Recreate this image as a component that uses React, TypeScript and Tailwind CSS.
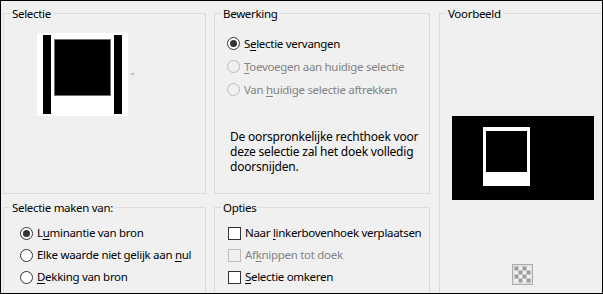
import React from 'react';

type GroupProps = {
  title: string;
  className?: string;
  children?: React.ReactNode;
};

function Group({ title, className = '', children }: GroupProps) {
  return (
    <div className={`shrink-0 border border-[#dcdcdc] ${className}`}>
      <div className="-mt-[8px] ml-[6px] w-fit bg-[#f0f0f0] px-[2px] text-[11.5px] leading-4 tracking-[-0.3px]">{title}</div>
      {children}
    </div>
  );
}

function Radio({ checked = false, disabled = false }: { checked?: boolean; disabled?: boolean }) {
  return (
    <span
      className={`flex h-[13px] w-[13px] shrink-0 items-center justify-center rounded-full border ${
        disabled ? 'border-[#bcbcbc] bg-[#f0f0f0]' : 'border-[#333333] bg-white'
      }`}
    >
      {checked && <span className="h-[7px] w-[7px] rounded-full bg-[#333333]" />}
    </span>
  );
}

function Check({ disabled = false }: { disabled?: boolean }) {
  return (
    <span
      className={`h-[13px] w-[13px] shrink-0 border ${
        disabled ? 'border-[#bcbcbc] bg-[#f0f0f0]' : 'border-[#333333] bg-white'
      }`}
    />
  );
}

// label with an underlined access key
function Label({ text, k, disabled = false }: { text: string; k: number; disabled?: boolean }) {
  return (
    <span className={`whitespace-nowrap text-[11.5px] tracking-[-0.3px] ${disabled ? 'text-[#838383]' : 'text-black'}`}>
      {text.slice(0, k)}
      <span className="underline underline-offset-[2px]">{text[k]}</span>
      {text.slice(k + 1)}
    </span>
  );
}

function SelectieThumb() {
  return (
    <svg width="91" height="83" viewBox="0 0 91 83">
      <rect width="91" height="83" fill="#fff" />
      <rect x="6" y="2" width="8" height="79" fill="#000" />
      <rect x="77" y="2" width="8" height="79" fill="#000" />
      <rect x="17.5" y="6.5" width="56" height="56" fill="#000" stroke="#6e6e6e" />
    </svg>
  );
}

function PreviewImage() {
  return (
    <svg width="142" height="84" viewBox="0 0 142 84">
      <rect width="142" height="84" fill="#000" />
      <rect x="31" y="11" width="47" height="59" fill="#fff" />
      <rect x="34" y="15" width="41" height="41" fill="#000" />
    </svg>
  );
}

function CheckerButton() {
  const cells = [];
  for (let r = 0; r < 4; r++) {
    for (let c = 0; c < 4; c++) {
      if ((r + c) % 2 === 0) cells.push(<rect key={`${r}-${c}`} x={2.5 + c * 4} y={2.5 + r * 4} width="4" height="4" fill="#9c9c9c" />);
    }
  }
  return (
    <svg width="21" height="21" viewBox="0 0 21 21">
      <rect x="0.5" y="0.5" width="20" height="20" fill="#e1e1e1" stroke="#adadad" />
      <rect x="2.5" y="2.5" width="16" height="16" fill="#f2f2f2" />
      {cells}
    </svg>
  );
}

export default function App() {
  return (
    <div className="flex h-[294px] w-[603px] overflow-hidden border border-black bg-[#f0f0f0] pl-[2px] pt-[12px] font-['Noto_Sans',sans-serif] text-[12px] tracking-[-0.2px] text-black">
      {/* left column */}
      <div className="flex w-[203px] shrink-0 flex-col">
        <Group title="Selectie" className="h-[181px]">
          <div className="ml-[33px] mt-[11px] flex items-center">
            <SelectieThumb />
            <svg className="ml-[2px]" width="5" height="3" viewBox="0 0 5 3">
              <path d="M0 0h5L2.5 3z" fill="#c4c4c4" />
            </svg>
          </div>
        </Group>
        <Group title="Selectie maken van:" className="mt-[13px] h-[120px]">
          <div className="mt-[6px] flex flex-col pl-[16px]">
            <div className="flex h-[22px] items-center gap-[4px]">
              <Radio checked />
              <Label text="Luminantie van bron" k={1} />
            </div>
            <div className="flex h-[22px] items-center gap-[4px]">
              <Radio />
              <Label text="Elke waarde niet gelijk aan nul" k={28} />
            </div>
            <div className="flex h-[22px] items-center gap-[4px]">
              <Radio />
              <Label text="Dekking van bron" k={0} />
            </div>
          </div>
        </Group>
      </div>

      {/* middle column */}
      <div className="ml-[8px] flex w-[216px] shrink-0 flex-col">
        <Group title="Bewerking" className="h-[181px]">
          <div className="mt-[10px] flex flex-col pl-[12px]">
            <div className="flex h-[23px] items-center gap-[4px]">
              <Radio checked />
              <Label text="Selectie vervangen" k={1} />
            </div>
            <div className="flex h-[23px] items-center gap-[4px]">
              <Radio disabled />
              <Label text="Toevoegen aan huidige selectie" k={0} disabled />
            </div>
            <div className="flex h-[23px] items-center gap-[4px]">
              <Radio disabled />
              <Label text="Van huidige selectie aftrekken" k={4} disabled />
            </div>
          </div>
          <p className="mt-[28px] whitespace-nowrap pl-[15px] leading-[15px]">
            De oorspronkelijke rechthoek voor
            <br />
            deze selectie zal het doek volledig
            <br />
            doorsnijden.
          </p>
        </Group>
        <Group title="Opties" className="mt-[13px] h-[120px]">
          <div className="mt-[6px] flex flex-col pl-[13px]">
            <div className="flex h-[22px] items-center gap-[4px]">
              <Check />
              <Label text="Naar linkerbovenhoek verplaatsen" k={5} />
            </div>
            <div className="flex h-[22px] items-center gap-[4px]">
              <Check disabled />
              <Label text="Afknippen tot doek" k={2} disabled />
            </div>
            <div className="flex h-[22px] items-center gap-[4px]">
              <Check />
              <Label text="Selectie omkeren" k={0} />
            </div>
          </div>
        </Group>
      </div>

      {/* right column */}
      <Group title="Voorbeeld" className="ml-[9px] h-[300px] w-[180px]">
        <div className="ml-[12px] mt-[94px] w-fit">
          <PreviewImage />
        </div>
        <div className="ml-[72px] mt-[64px] w-fit">
          <CheckerButton />
        </div>
      </Group>
    </div>
  );
}
